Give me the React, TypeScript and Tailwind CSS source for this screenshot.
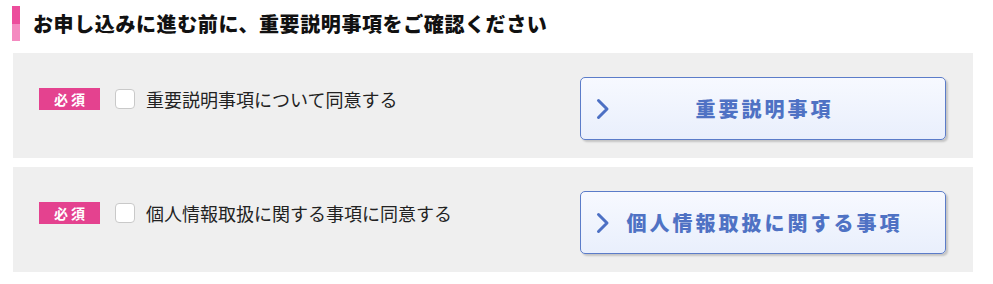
import React from "react";

const items = [
  { label: "重要説明事項について同意する", button: "重要説明事項" },
  { label: "個人情報取扱に関する事項に同意する", button: "個人情報取扱に関する事項" },
];

const Chevron = () => (
  <svg width="14" height="22" viewBox="0 0 14 22" fill="none" className="absolute left-[15px] top-1/2 -translate-y-1/2">
    <path d="M2.5 2.5 L11 11 L2.5 19.5" stroke="#4d70c4" strokeWidth="3" strokeLinecap="round" strokeLinejoin="round" />
  </svg>
);

export default function App() {
  return (
    <div
      className="w-[993px] h-[284px] bg-white pt-[6px] pl-[12px] pr-[20px]"
      style={{ fontFamily: '"Noto Sans CJK JP", "Noto Sans", sans-serif' }}
    >
      {/* heading */}
      <div className="flex items-center h-[35px]">
        <div className="flex flex-col w-[8px] h-[35px]">
          <div className="flex-1 bg-[#ec4d9c]" />
          <div className="flex-1 bg-[#f48ac0]" />
        </div>
        <h2 className="ml-[13px] text-[20px] font-black leading-none tracking-[0.6px] text-[#111]">
          お申し込みに進む前に、重要説明事項をご確認ください
        </h2>
      </div>

      <div className="mt-[12px] ml-[1px] flex flex-col gap-[9px]">
        {items.map((item) => (
          <div
            key={item.button}
            className="flex items-start justify-between bg-[#efefef] w-[960px] h-[105px] pt-[24px] pl-[26px] pr-[27px]"
          >
            <div className="flex items-center mt-[10px]">
              <span className="flex items-center justify-center w-[61px] h-[22px] bg-[#e4428f] text-white text-[14px] font-bold tracking-[3px] pl-[3px] leading-none">
                必須
              </span>
              <span className="ml-[15px] w-[20px] h-[20px] bg-white border-[1.5px] border-[#c9c9c9] rounded-[4px]" />
              <span className="ml-[11px] text-[18px] leading-[24px] text-[#222]">{item.label}</span>
            </div>
            <button className="relative w-[366px] h-[63px] rounded-[5px] border border-[#5b7cc9] bg-gradient-to-b from-[#f7f9ff] to-[#e9effc] shadow-[2px_2px_2px_rgba(0,0,0,0.18)] text-[#4f72c4] text-[20px] font-black tracking-[3px] pl-[3px] leading-none">
              <Chevron />
              {item.button}
            </button>
          </div>
        ))}
      </div>
    </div>
  );
}
